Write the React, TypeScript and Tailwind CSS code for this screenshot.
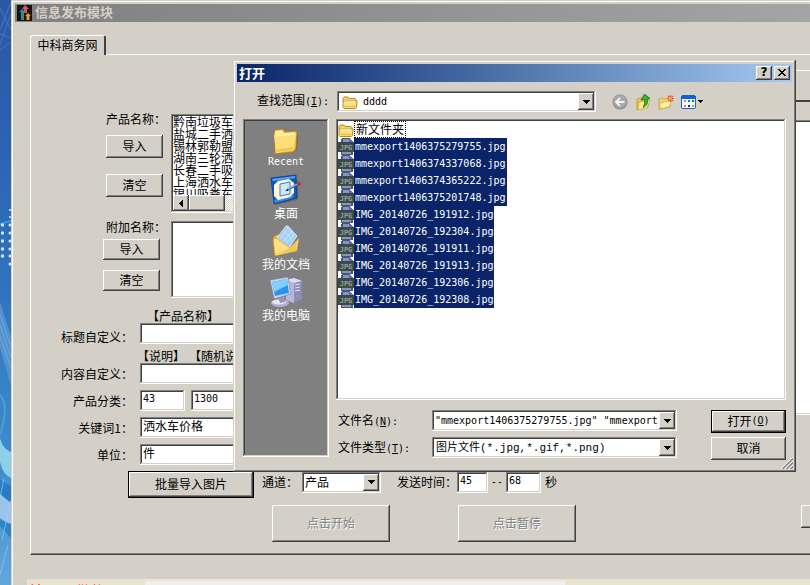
import React from "react";

const raised =
  "bg-[#d4d0c8] shadow-[inset_-1px_-1px_#404040,inset_1px_1px_#fff,inset_-2px_-2px_#808080]";
const sunken =
  "bg-white shadow-[inset_-1px_-1px_#fff,inset_1px_1px_#808080,inset_-2px_-2px_#d4d0c8,inset_2px_2px_#404040]";
const latin = "font-['DejaVu_Sans_Mono','Liberation_Mono',monospace] text-[10px]";

function ArrowDown() {
  return (
    <svg viewBox="0 0 7 4" className="h-1 w-[7px]" shapeRendering="crispEdges" aria-hidden="true">
      <path d="M0 0h7v1H0zM1 1h5v1H1zM2 2h3v1H2zM3 3h1v1H3z" />
    </svg>
  );
}

function ArrowBox() {
  return (
    <span className={`pointer-events-none flex w-4 items-center justify-center justify-self-end [grid-area:1/1] ${raised}`}>
      <ArrowDown />
    </span>
  );
}

function PushButton({ className = "", ...rest }: React.ButtonHTMLAttributes<HTMLButtonElement>) {
  return <button type="button" className={`flex items-center justify-center pb-0.5 ${raised} ${className}`} {...rest} />;
}

function TextBox({ className = "", ...rest }: React.InputHTMLAttributes<HTMLInputElement>) {
  return <input type="text" className={`h-[21px] px-[3px] pb-[5px] pt-px outline-none ${sunken} ${className}`} {...rest} />;
}

function SmallFolder() {
  return (
    <svg viewBox="0 0 16 16" className="h-4 w-4 shrink-0" aria-hidden="true">
      <path d="M1 4.500 2 3h4l1.300 1.500H13l1 1V8H1z" fill="#f5d060" stroke="#b98a1c" />
      <path d="M2 6h11v2H2z" fill="#fff8cf" />
      <path d="M1 13.500V8.300L2.600 7H15l-.6 6.500-1 1H2z" fill="#fbe07a" stroke="#b98a1c" />
      <path d="M2.300 9.200 3 8h10.600" fill="none" stroke="#fffbe0" />
      <path d="M2.500 12.600h11" stroke="#e9b93d" />
    </svg>
  );
}

function JpgIcon() {
  return (
    <svg viewBox="0 0 16 17" className="h-[17px] w-4 shrink-0" aria-hidden="true" shapeRendering="crispEdges">
      <path d="M4 0h8l3 4v13H3V1z" fill="#46557f" />
      <path d="M5 1h6v3H5zM4 14h9v2H4z" fill="#8695ba" />
      <path d="M11 1h2l2 3h-4z" fill="#62719b" />
      <path d="M0 4h16v10H0z" fill="#3f4d3f" />
      <path d="M0 4h16v1H0z" fill="#33426c" />
      <text x="8" y="12" textAnchor="middle" fill="#8f9cb4" fontSize="7" fontFamily="DejaVu Sans Mono" fontWeight="bold">
        JPG
      </text>
    </svg>
  );
}

function FolderPlace() {
  return (
    <svg viewBox="0 0 32 32" className="h-8 w-8" aria-hidden="true">
      <path d="M6 31 22 29l5-2 1-16-3 1z" fill="#5c5c5c" opacity=".6" />
      <path d="M4 10 5 7l8-1 2 3 11-1 1 2-1 16-3 3-18 2z" fill="#e9b93b" stroke="#a97a17" strokeWidth=".7" />
      <path d="M5 12V8l7-1 2 3 11-1v3z" fill="#ffe99a" />
      <path d="M4 12 24 10l2 1-2 16-18 3z" fill="#fdde78" />
      <path d="m5 13 20-2" stroke="#fffbd2" />
      <path d="m6.500 28 17-3" stroke="#f1c24b" strokeWidth="2" />
    </svg>
  );
}

function DesktopPlace() {
  return (
    <svg viewBox="0 0 32 32" className="h-8 w-8" aria-hidden="true">
      <path d="m6 31 22-5 1-21z" fill="#5c5c5c" opacity=".6" />
      <path d="M1 4 26 1l1 23-23 6z" fill="#0d5abc" stroke="#083f8c" strokeWidth=".8" />
      <path d="M2 5 25 2v2L3 7z" fill="#5aa3f2" />
      <path d="m4 26 20-5-1 3-18 5z" fill="#3b8de6" />
      <path d="m8 7 11-2 5 4v10l-4 4-12 3-4-4V11z" fill="#fff6cf" />
      <path d="m10 10 10-2v12l-10 2z" fill="#cfe7fc" stroke="#2f7fd4" />
      <path d="m17 16 11-6" stroke="#2a6cb8" strokeWidth="2.200" />
      <path d="m17 15.500 10-5.500" stroke="#9fd0fb" />
      <circle cx="29" cy="10" r="2" fill="#c8321c" />
      <path d="m15 17 3-2v2z" fill="#222" />
    </svg>
  );
}

function DocumentsPlace() {
  return (
    <svg viewBox="0 0 32 32" className="h-8 w-8" aria-hidden="true">
      <path d="M3 12 8 9l3 2 10 5v10L4 29z" fill="#eebf48" stroke="#a97a17" strokeWidth=".7" />
      <path d="m7 13 9-12h2l9 10-8 12z" fill="#a4d0f6" stroke="#e4f3ff" strokeWidth=".8" />
      <path d="m11 10 7 7m-4-11 8 8m-5-11 7 7M10 14l8-11m-5 14 9-11m-6 13 9-10" stroke="#d3eafd" strokeWidth=".7" />
      <path d="m3 14 3-1 9 6 5 4 9-10-2 13-22 5z" fill="#fde083" stroke="#b98a1c" strokeWidth=".6" />
      <path d="m6 29 12-5 9-8-1 10z" fill="#f3c657" />
    </svg>
  );
}

function ComputerPlace() {
  return (
    <svg viewBox="0 0 32 32" className="h-8 w-8" aria-hidden="true">
      <path d="m16 4 8-2 8 3v18l-8 4-8-3z" fill="#8c8cba" />
      <path d="m16 4 8-2 8 3-8 2z" fill="#dedef2" />
      <path d="m16 4 8 3v20l-8-3z" fill="#b9b9dc" />
      <path d="m25 9 5-1m-5 4 5-1m-5 4 5-1" stroke="#e6e6f6" />
      <circle cx="27" cy="20" r="1" fill="#55cf62" />
      <ellipse cx="10" cy="27" rx="9" ry="4" fill="#b0b0d2" />
      <ellipse cx="9" cy="26" rx="7" ry="2.500" fill="#e6e6f5" />
      <path d="m8 20 6-1 1 7-5 1z" fill="#9393bd" />
      <path d="m0 4 18-3 3 17-17 5z" fill="#d3d3ea" stroke="#7474a5" strokeWidth=".6" />
      <path d="m2 6 15-3 2 14-14 3z" fill="#2794ef" />
      <path d="m2 6 15-3 1 6-14 7z" fill="#7fd0fd" />
    </svg>
  );
}

const places = [
  { label: "Recent", icon: <FolderPlace />, mono: true },
  { label: "桌面", icon: <DesktopPlace /> },
  { label: "我的文档", icon: <DocumentsPlace /> },
  { label: "我的电脑", icon: <ComputerPlace /> },
];

const files = [
  "mmexport1406375279755.jpg",
  "mmexport1406374337068.jpg",
  "mmexport1406374365222.jpg",
  "mmexport1406375201748.jpg",
  "IMG_20140726_191912.jpg",
  "IMG_20140726_192304.jpg",
  "IMG_20140726_191911.jpg",
  "IMG_20140726_191913.jpg",
  "IMG_20140726_192306.jpg",
  "IMG_20140726_192308.jpg",
];

const products = [
  "黔南垃圾车价格",
  "盐城二手洒水车",
  "锡林郭勒盟洒水车",
  "湖南三轮洒水车",
  "长春二手吸粪车",
  "上海洒水车价格",
  "银川吸粪车价格",
];

function Shortcut({ letter }: { letter: string }) {
  return (
    <span className={latin}>
      (<span className="underline">{letter}</span>)
    </span>
  );
}

function ToolIcons() {
  return (
    <div className="ml-4 flex items-center gap-[7px]">
      <button type="button" aria-label="后退" disabled>
        <svg viewBox="0 0 16 16" className="h-4 w-4">
          <circle cx="8" cy="8" r="7.500" fill="#8e8e8e" />
          <circle cx="8" cy="7.500" r="6.500" fill="#a9a9a9" />
          <path d="M12.500 8H4.500M8 4 4 8l4 4" fill="none" stroke="#f4f4f4" strokeWidth="1.800" />
        </svg>
      </button>
      <button type="button" aria-label="向上一级">
        <svg viewBox="0 0 16 16" className="h-4 w-4">
          <path d="m2 5 4-1 1 1 6-1v9l-10 2.500H2z" fill="#f2c84e" stroke="#c4901c" strokeWidth=".8" />
          <path d="m4 8 11-2-3 8-9 2z" fill="#ffec98" stroke="#c4901c" strokeWidth=".6" />
          <path d="M9.500 0 15 4.500l-2.500.5c.5 4-.5 6.500-4.500 8.500 1.500-2.500 2-5 1.500-8L6 6z" fill="#39b52b" stroke="#14720f" strokeWidth=".8" />
        </svg>
      </button>
      <button type="button" aria-label="新建文件夹">
        <svg viewBox="0 0 16 16" className="h-4 w-4">
          <path d="m1 5 4-1 1 1 6-1v9L2 15H1z" fill="#f6d364" stroke="#cfa032" strokeWidth=".8" />
          <path d="m2 9 12-3-3 7-9 2z" fill="#fff0a8" stroke="#cfa032" strokeWidth=".6" />
          <path d="M12.500 1v7M9 4.500h7M10 2l5 5m0-5-5 5" stroke="#f0532c" strokeWidth="1.200" />
          <circle cx="12.500" cy="4.500" r="1.300" fill="#ffd36b" />
        </svg>
      </button>
      <button type="button" aria-label="查看" className="flex items-center gap-0.5">
        <svg viewBox="0 0 15 14" className="h-[14px] w-[15px]" shapeRendering="crispEdges">
          <path d="M0 1h1V0h13v1h1v12h-1v1H1v-1H0z" fill="#0d64d0" />
          <path d="M1 4h13v9H1z" fill="#f7fbff" />
          <path d="M3 5h2v2H3z" fill="#a58fce" />
          <path d="M7 5h2v2H7z" fill="#2672dd" />
          <path d="M11 5h2v2h-2z" fill="#178a2a" />
          <path d="M3 10h2v2H3z" fill="#ef7448" />
          <path d="M7 10h2v2H7z" fill="#12338f" />
          <path d="M11 10h2v2h-2z" fill="#d2a217" />
        </svg>
        <svg viewBox="0 0 5 3" className="h-[3px] w-[5px]" shapeRendering="crispEdges">
          <path d="M0 0h5v1H0zM1 1h3v1H1zM2 2h1v1H2z" />
        </svg>
      </button>
    </div>
  );
}

function OpenDialog() {
  return (
    <section
      role="dialog"
      aria-label="打开"
      className="absolute left-[233px] top-[60px] w-[563px] bg-[#d4d0c8] p-1 pb-3 shadow-[inset_-1px_-1px_#404040,inset_1px_1px_#d4d0c8,inset_-2px_-2px_#808080,inset_2px_2px_#fff]"
    >
      <header className="flex h-[18px] items-center bg-linear-to-r from-[#0a246a] to-[#a6caf0] px-0.5">
        <h2 className="flex-1 text-[13px] font-bold leading-4 text-white">打开</h2>
        <PushButton aria-label="帮助" className="h-[14px] w-4 font-['DejaVu_Sans',sans-serif] text-xs font-bold leading-none">
          ?
        </PushButton>
        <PushButton aria-label="关闭" className="ml-0.5 h-[14px] w-4">
          <svg viewBox="0 0 8 7" className="h-[7px] w-2" shapeRendering="crispEdges">
            <path d="M0 0h2v1h1v1h2V1h1V0h2v1H7v1H6v1H5v1h1v1h1v1h1v1H6V6H5V5H3v1H2v1H0V6h1V5h1V4h1V3H2V2H1V1H0z" />
          </svg>
        </PushButton>
      </header>

      <div className="mt-[9px] flex h-[21px] items-center pl-5">
        <label htmlFor="look-in" className="w-20 pb-0.5">
          查找范围
          <Shortcut letter="I" />
          <span className={latin}>:</span>
        </label>
        <div className={`grid h-[21px] w-[259px] p-0.5 ${sunken}`}>
          <select id="look-in" className={`appearance-none pl-6 outline-none [grid-area:1/1] ${latin}`}>
            <option>dddd</option>
          </select>
          <span className="pointer-events-none ml-[3px] self-center [grid-area:1/1]">
            <SmallFolder />
          </span>
          <ArrowBox />
        </div>
        <ToolIcons />
      </div>

      <div className="mt-[7px] flex items-start gap-[7px] px-1.5">
        <nav className="flex h-[338px] w-[86px] flex-col items-center gap-[5px] bg-[#808080] pt-1 shadow-[inset_-1px_-1px_#fff,inset_1px_1px_#808080,inset_-2px_-2px_#d4d0c8,inset_2px_2px_#404040]">
          {places.map((p) => (
            <button key={p.label} type="button" className="flex flex-col items-center text-white">
              {p.icon}
              <span className={p.mono ? `leading-[14px] ${latin}` : ""}>{p.label}</span>
            </button>
          ))}
        </nav>

        <div className="flex-1">
          <ul className={`h-[281px] p-0.5 ${sunken}`}>
            <li className="flex h-[17px] items-center">
              <SmallFolder />
              <span className="border border-dotted border-black px-px pb-0.5 leading-[13px]">新文件夹</span>
            </li>
            {files.map((f) => (
              <li key={f} className="flex h-[17px]">
                <JpgIcon />
                <span className={`bg-[#0a246a] px-px leading-[17px] text-white ${latin}`}>{f}</span>
              </li>
            ))}
          </ul>

          <div className="mt-2.5 grid grid-cols-[96px_245px_75px] items-start gap-y-1">
            <label htmlFor="file-name" className="pl-0.5 leading-5">
              文件名
              <Shortcut letter="N" />
              <span className={latin}>:</span>
            </label>
            <div className={`flex h-[21px] p-0.5 ${sunken}`}>
              <input
                id="file-name"
                type="text"
                defaultValue={'"mmexport1406375279755.jpg" "mmexport1406374337068.jpg"'}
                className={`min-w-0 flex-1 pl-px outline-none ${latin}`}
              />
              <button type="button" aria-label="文件名列表" className={`flex w-4 items-center justify-center ${raised}`}>
                <ArrowDown />
              </button>
            </div>
            <PushButton className="ml-[34px] h-[23px] w-[75px] border border-black">
              打开
              <Shortcut letter="O" />
            </PushButton>
            <label htmlFor="file-type" className="pl-0.5 leading-5">
              文件类型
              <Shortcut letter="T" />
              <span className={latin}>:</span>
            </label>
            <div className={`grid h-[21px] p-0.5 ${sunken}`}>
              <select
                id="file-type"
                className="appearance-none pl-0.5 font-['Liberation_Mono','Noto_Sans_CJK_SC',monospace] text-[11px] outline-none [grid-area:1/1]"
              >
                <option>图片文件(*.jpg,*.gif,*.png)</option>
              </select>
              <ArrowBox />
            </div>
            <PushButton className="ml-[34px] h-[23px] w-[75px]">取消</PushButton>
          </div>
        </div>
      </div>

      <svg viewBox="0 0 12 12" className="absolute bottom-[3px] right-[3px] h-3 w-3" aria-hidden="true">
        <path d="M0 12 12 0M4 12l8-8M8 12l4-4" stroke="#fff" />
        <path d="M1.500 12 12 1.500M5.500 12 12 5.500M9.500 12 12 9.500" stroke="#808080" strokeWidth="1.300" />
      </svg>
    </section>
  );
}

function FormRow({ id, label, children, low = false }: { id: string; label: string; children: React.ReactNode; low?: boolean }) {
  return (
    <div className={low ? "flex items-end gap-[7px]" : "flex items-center gap-[7px]"}>
      <label htmlFor={id} className="w-[102px] shrink-0 text-right">
        {label}
      </label>
      {children}
    </div>
  );
}

function PublishForm() {
  return (
    <form className="min-w-0 flex-1 pb-3 pt-[57px]">
      <div className="flex gap-[5px] pl-[75px]">
        <div className="w-[60px]">
          <p>产品名称：</p>
          <PushButton className="mt-[9px] h-[23px] w-[57px]">导入</PushButton>
          <PushButton className="mt-4 h-[23px] w-[57px]">清空</PushButton>
        </div>
        <div className={`mt-0.5 flex h-[99px] flex-1 flex-col p-0.5 ${sunken}`}>
          <ul className="flex-1 overflow-hidden leading-3">
            {products.map((p) => (
              <li key={p}>{p}</li>
            ))}
          </ul>
          <div className="flex h-4 shrink-0 bg-[repeating-conic-gradient(#fff_0_25%,#d4d0c8_0_50%)] bg-[length:2px_2px]">
            <button type="button" aria-label="向左滚动" className={`flex w-4 items-center justify-center ${raised}`}>
              <svg viewBox="0 0 4 7" className="h-[7px] w-1" shapeRendering="crispEdges">
                <path d="M3 0h1v7H3zM2 1h1v5H2zM1 2h1v3H1zM0 3h1v1H0z" />
              </svg>
            </button>
            <span className={`w-9 ${raised}`} />
          </div>
        </div>
      </div>

      <div className="mt-[7px] flex gap-[5px] pl-[72px]">
        <div className="w-[63px]">
          <label htmlFor="extra" className="block pl-[3px]">
            附加名称：
          </label>
          <PushButton className="mt-[5px] h-[21px] w-[57px]">导入</PushButton>
          <PushButton className="mt-2.5 h-[21px] w-[57px]">清空</PushButton>
        </div>
        <textarea id="extra" className={`mt-px h-[77px] flex-1 resize-none p-1 outline-none ${sunken}`} />
      </div>

      <p className="mt-[11px] pl-[116px]">【产品名称】</p>
      <FormRow id="title" label="标题自定义：" low>
        <TextBox id="title" className="min-w-0 flex-1" />
      </FormRow>
      <p className="mt-[5px] flex gap-1 pl-[106px]">
        <span>【说明】</span>
        <span>【随机说明】</span>
      </p>
      <div className="flex flex-col gap-1.5">
        <FormRow id="body" label="内容自定义：">
          <TextBox id="body" className="min-w-0 flex-1" />
        </FormRow>
        <FormRow id="category" label="产品分类：">
          <div className="flex min-w-0 flex-1 gap-1.5">
            <TextBox id="category" defaultValue="43" className={`w-[45px] ${latin}`} />
            <TextBox aria-label="子分类" defaultValue="1300" className={`w-[60px] ${latin}`} />
          </div>
        </FormRow>
        <FormRow id="keyword" label="关键词1：">
          <TextBox id="keyword" defaultValue="洒水车价格" className="min-w-0 flex-1" />
        </FormRow>
        <FormRow id="unit" label="单位：">
          <TextBox id="unit" defaultValue="件" className="min-w-0 flex-1" />
        </FormRow>
      </div>

      <div className="mt-1.5 flex items-start pl-[97px]">
        <PushButton className="h-[27px] w-[126px] border border-black">批量导入图片</PushButton>
        <div className="flex h-[22px] items-center">
          <label htmlFor="channel" className="ml-2 mr-1">
            通道：
          </label>
          <div className={`grid h-[21px] w-[79px] p-0.5 ${sunken}`}>
            <select id="channel" className="appearance-none pl-px text-xs outline-none [grid-area:1/1]">
              <option>产品</option>
            </select>
            <ArrowBox />
          </div>
          <label htmlFor="delay-from" className="ml-4">
            发送时间：
          </label>
          <TextBox id="delay-from" defaultValue="45" className={`w-[31px] ${latin}`} />
          <span className={`mx-[3px] ${latin}`}>--</span>
          <TextBox aria-label="结束时间" defaultValue="68" className={`w-[35px] ${latin}`} />
          <span className="ml-1">秒</span>
        </div>
      </div>

      <div className="mt-[7px] flex gap-[68px] pl-[241px]">
        <PushButton disabled className="h-[37px] w-[118px] text-[#808080] [text-shadow:1px_1px_#fff]">
          点击开始
        </PushButton>
        <PushButton disabled className="h-[37px] w-[118px] text-[#808080] [text-shadow:1px_1px_#fff]">
          点击暂停
        </PushButton>
      </div>
    </form>
  );
}

function Wallpaper() {
  return (
    <svg viewBox="0 0 11 585" preserveAspectRatio="none" className="h-full w-[11px] shrink-0" aria-hidden="true">
      <defs>
        <linearGradient id="sky" x1="0" y1="0" x2="0" y2="1">
          <stop offset="0" stopColor="#2b57a6" />
          <stop offset=".2" stopColor="#2c60ae" />
          <stop offset=".5" stopColor="#3074bd" />
          <stop offset=".8" stopColor="#3f8dcf" />
          <stop offset="1" stopColor="#62a6dc" />
        </linearGradient>
      </defs>
      <path d="M0 0h11v585H0z" fill="url(#sky)" />
      <path d="M0 30 11 2M0 44 11 14M0 8l11 22M0 34l11 4M0 50l11-8" stroke="#7ba2d8" opacity=".4" />
      <path d="m0 224 11-3" stroke="#35aadf" strokeWidth="1.500" />
      <g fill="#d5e8fa">
        {[225, 233, 241, 249, 256].map((y) => (
          <React.Fragment key={y}>
            <circle cx="2.500" cy={y} r="1.700" />
            <circle cx="10" cy={y} r="1.500" />
          </React.Fragment>
        ))}
        <circle cx="10" cy="210" r="1" />
        <circle cx="10" cy="217" r="1" />
        <circle cx="10" cy="264" r="1.500" />
      </g>
      <path d="m0 302 11 34v50L0 348z" fill="#6ea4da" opacity=".55" />
      <path d="m0 314 11 33M0 325l11 32M0 336l11 32" stroke="#a3c8ec" opacity=".4" />
      <path d="M0 395c7 8 6 20 0 40" fill="none" stroke="#43a3cd" strokeWidth="2" />
      <path d="M0 438c2 8 6 12 11 14v26c-6-3-9-8-11-16z" fill="#8bd0e6" />
      <path d="m0 480 11 6v20L0 498z" fill="#2a7cc4" />
      <path d="m0 494 11 9v22L0 518z" fill="#9bc4ea" />
      <path d="m0 520 11 4v14L0 526z" fill="#2f84ca" />
      <path d="M4 478 0 498M11 500 2 540M8 545 0 575" stroke="#a9d0f0" opacity=".6" />
    </svg>
  );
}

export default function App() {
  return (
    <div className="relative flex h-screen overflow-hidden bg-[#d4d0c8] font-['Noto_Sans_CJK_SC',sans-serif] text-xs leading-[14px] text-black">
      <Wallpaper />
      <main className="flex min-w-0 flex-1 flex-col pl-1 pt-1 shadow-[inset_1px_1px_#d4d0c8,inset_2px_2px_#fff]">
        <header className="flex h-[18px] shrink-0 items-center gap-[3px] bg-linear-to-r from-[#808080] to-[#a4a4a4] pl-0.5">
          <svg viewBox="0 0 15 16" className="h-4 w-[15px]" aria-hidden="true">
            <path d="M0 0h15v16H0z" fill="#151515" />
            <path d="M8 0 5 4h2v4h3V4h2z" fill="#e2506a" />
            <path d="M5 4 2 7h2v8h3V7h2z" fill="#2f8f86" />
            <path d="m11 8-3 3h1.500v4h3v-4H14z" fill="#f6951f" />
          </svg>
          <h1 className="pb-0.5 text-[13px] font-bold leading-4 text-[#d4d0c8]">信息发布模块</h1>
        </header>

        <div className="ml-[15px] mt-[13px] shrink-0">
          <div role="tablist" className="flex">
            <button
              type="button"
              role="tab"
              aria-selected="true"
              className="relative -mb-px h-5 w-[76px] rounded-t-[3px] border-l border-r-2 border-t border-l-white border-r-[#404040] border-t-white bg-[#d4d0c8] pb-0.5"
            >
              中科商务网
            </button>
          </div>
          <div className="flex border-b border-l border-t border-b-[#404040] border-l-white border-t-white shadow-[inset_0_-1px_#808080]">
            <PublishForm />
            <div className="flex w-[30px] flex-col pt-[15px]">
              <div className="h-8 border-b-2 border-t border-b-[#404040] border-t-white" />
              <div className={`-mr-1 mt-[18px] h-[295px] ${sunken}`} />
              <PushButton aria-label="更多" className="-mr-2 ml-[21px] mt-[90px] h-[23px]" />
            </div>
          </div>
        </div>

        <footer className="ml-3 mt-6 flex flex-1 items-start bg-[#e8e4d0]">
          <p className="w-[118px] shrink-0 whitespace-nowrap pl-[3px] pt-1 text-[15px] leading-4 text-[#f00]">注册可供使用</p>
          <div className="mt-0.5 h-5 w-[420px] bg-[#efefef]" />
        </footer>
      </main>
      <OpenDialog />
    </div>
  );
}
